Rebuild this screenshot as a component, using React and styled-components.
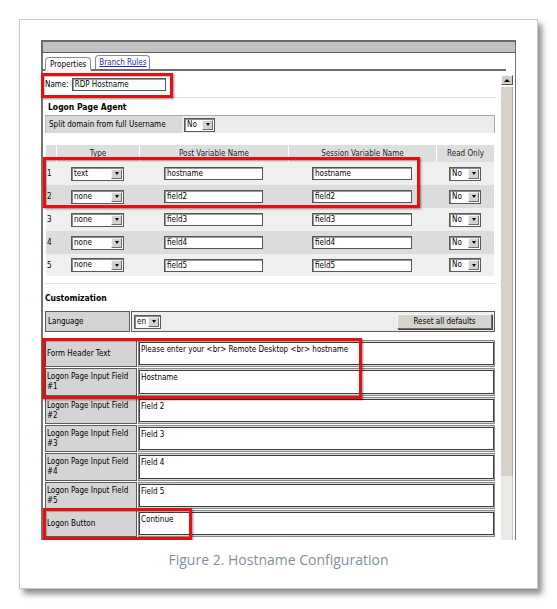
import React from 'react';
import styled, { createGlobalStyle } from 'styled-components';

const Global = createGlobalStyle`
  html, body { margin: 0; padding: 0; background: #fff; }
  body {
    width: 557px; height: 609px; overflow: hidden;
    font-family: "DejaVu Sans Condensed", "DejaVu Sans", sans-serif;
    font-size: 8px; color: #000;
  }
  * { box-sizing: border-box; }
`;

const Card = styled.div`
  margin: 19px 0 0 19px;
  width: 519px;
  height: 570px;
  border: 1px solid #c9c9c9;
  background: #fff;
  box-shadow: 4px 5px 6px rgba(0, 0, 0, 0.45);
  padding: 20px 0 0 21px;
  display: flex;
  flex-direction: column;
`;

const Frame = styled.div`
  position: relative;
  width: 475px;
  height: 500px;
  overflow: hidden;
  display: flex;
  flex-direction: column;
  background: #fff;
`;

const TitleBar = styled.div`
  height: 13px;
  flex: none;
  background: #c2c2c2;
  border-top: 2px solid #6b6b6b;
  border-bottom: 1px solid #5e5e5e;
  border-left: 2px solid #6b6b6b;
  border-right: 1px solid #6b6b6b;
`;

const Body = styled.div`
  flex: 1;
  display: flex;
  flex-direction: column;
  border-left: 2px solid #747474;
  border-right: 1px solid #747474;
  min-height: 0;
`;

const TabStrip = styled.div`
  height: 18px;
  flex: none;
  display: flex;
  align-items: flex-end;
  gap: 4px;
  padding-left: 2px;
  margin-right: 9px;
  border-bottom: 2px solid #6e6e6e;
`;

const Tab = styled.div`
  height: 14px;
  margin-bottom: ${p => (p.$active ? '-2px' : '0')};
  padding: 0 ${p => (p.$active ? 4 : 3)}px;
  border: 1px solid #8c8c8c;
  border-bottom: ${p => (p.$active ? '2px solid #fff' : 'none')};
  border-radius: 4px 4px 0 0;
  background: #fff;
  line-height: 13px;
  color: ${p => (p.$active ? '#000' : '#2b2bb0')};
  text-decoration: ${p => (p.$active ? 'none' : 'underline')};
`;

const Panel = styled.div`
  flex: 1;
  display: flex;
  min-height: 0;
`;

const Content = styled.div`
  width: 458px;
  flex: none;
  display: flex;
  flex-direction: column;
  padding-left: 2px;
`;

const NameRow = styled.div`
  height: 26px;
  flex: none;
  display: flex;
  align-items: center;
  gap: 3px;
`;

const TextInput = styled.div`
  width: ${p => p.$w}px;
  height: 13px;
  border: 1px solid #555;
  box-shadow: inset 1px 1px 0 #9a9a9a;
  background: #fff;
  padding-left: 2px;
  line-height: 11px;
  white-space: nowrap;
  overflow: hidden;
`;

const Sep = styled.div`
  height: 1px;
  flex: none;
  margin-right: 4px;
  background: #e2e2e2;
  margin-top: ${p => p.$mt || 0}px;
`;

const SectionTitle = styled.div`
  height: ${p => p.$h}px;
  flex: none;
  display: flex;
  align-items: center;
  padding-left: ${p => p.$pl || 0}px;
  font-weight: bold;
  font-size: 8.5px;
`;

const SplitRow = styled.div`
  width: 450px;
  height: 18px;
  flex: none;
  display: grid;
  grid-template-columns: 136px 1fr;
  border-top: 1px solid #a9a9a9;
  border-right: 1px solid #a9a9a9;
  border-left: 1px solid #bdbdbd;
`;

const SplitLabel = styled.div`
  background: #d9d9d9;
  display: flex;
  align-items: center;
  padding-left: 3px;
`;

const SplitValue = styled.div`
  background: #ececec;
  display: flex;
  align-items: center;
  padding-left: 2px;
`;

const SelectBox = styled.div`
  width: ${p => p.$w}px;
  height: 14px;
  flex: none;
  display: flex;
  align-items: center;
  border: 1px solid #5a5a5a;
  box-shadow: inset 1px 1px 0 #8a8a8a;
  background: #fff;
  padding-left: 2px;
`;

const SelectText = styled.span`
  flex: 1;
  line-height: 12px;
`;

const ArrowBtn = styled.span`
  width: 11px;
  height: 10px;
  margin-right: 1px;
  background: #d6d3ce;
  border: 1px solid;
  border-color: #f4f4f4 #6e6e6e #6e6e6e #f4f4f4;
  display: flex;
  align-items: center;
  justify-content: center;
  &::after {
    content: '';
    border-left: 2.5px solid transparent;
    border-right: 2.5px solid transparent;
    border-top: 3px solid #000;
  }
`;

const Select = ({ w, children }) => (
  <SelectBox $w={w}>
    <SelectText>{children}</SelectText>
    <ArrowBtn />
  </SelectBox>
);

const VarTable = styled.div`
  margin: 12px 0 0 1px;
  width: 448px;
  flex: none;
  display: grid;
  grid-template-columns: 10px 83px 149px 148px 58px;
  grid-template-rows: 17px repeat(4, 23px) 22px;
`;

const HeadCell = styled.div`
  background: #dedede;
  border-left: ${p => (p.$first ? 'none' : '1px solid #fff')};
  display: flex;
  align-items: center;
  justify-content: center;
  color: #222;
`;

const BodyCell = styled.div`
  background: ${p => (p.$dark ? '#dcdcdc' : '#efefef')};
  display: flex;
  align-items: center;
  justify-content: ${p => (p.$left ? 'flex-start' : 'center')};
  padding-left: ${p => (p.$left ? '1px' : '0')};
`;

const LangRow = styled.div`
  width: 450px;
  height: 21px;
  flex: none;
  display: grid;
  grid-template-columns: 85px 1fr;
  gap: 1px;
`;

const LangLabel = styled.div`
  background: #d4d4d4;
  border: 1px solid #5c5c5c;
  display: flex;
  align-items: center;
  padding-left: 2px;
`;

const LangValue = styled.div`
  background: #ededed;
  border: 1px solid #5c5c5c;
  display: flex;
  align-items: center;
  justify-content: space-between;
  padding: 0 2px 0 2px;
`;

const ResetButton = styled.div`
  width: 95px;
  height: 15px;
  background: #d6d3ce;
  border: 1px solid;
  border-color: #f6f6f6 #707070 #707070 #f6f6f6;
  box-shadow: 1px 1px 0 #404040;
  display: flex;
  align-items: center;
  justify-content: center;
`;

const FormTable = styled.div`
  margin-top: 8px;
  width: 450px;
  flex: none;
  display: grid;
  grid-template-columns: 92px 1fr;
  grid-auto-rows: 28.33px;
`;

const FormLabel = styled.div`
  margin-bottom: 1px;
  background: #d4d4d4;
  border: 1px solid #5c5c5c;
  display: flex;
  align-items: center;
  padding: 1px 0 0 1px;
  line-height: 10px;
`;

const FormValue = styled.div`
  margin: 0 0 1px 1px;
  border: 1px solid #8a8a8a;
  background: #d9d9d9;
  padding: 1px 0 1px 0;
  display: flex;
`;

const TextBox = styled.div`
  flex: 1;
  background: #fff;
  border: 1px solid #3e3e3e;
  padding: 2px 1px 0;
  line-height: 10px;
  white-space: nowrap;
  overflow: hidden;
`;

const Scrollbar = styled.div`
  width: 12px;
  flex: none;
  margin-top: 4px;
  display: flex;
  flex-direction: column;
`;

const UpBtn = styled.div`
  height: 10px;
  flex: none;
  background: #d4d0c8;
  border: 1px solid;
  border-color: #f8f8f8 #555 #555 #f8f8f8;
  display: flex;
  align-items: center;
  justify-content: center;
  &::after {
    content: '';
    border-left: 3px solid transparent;
    border-right: 3px solid transparent;
    border-bottom: 3px solid #000;
  }
`;

const Thumb = styled.div`
  height: 389px;
  flex: none;
  margin-top: 2px;
  background: #d6d2ca;
  border-right: 1px solid #a8a8a8;
`;

const Track = styled.div`
  flex: 1;
  background: #ebe9e5;
  border-right: 1px solid #c8c8c8;
`;

const RedBox = styled.div`
  position: absolute;
  left: ${p => p.$x}px;
  top: ${p => p.$y}px;
  width: ${p => p.$w}px;
  height: ${p => p.$h}px;
  border: 3px solid #e5100f;
  box-shadow: 1px 1px 2px rgba(0, 0, 0, 0.45), inset 1px 1px 1px rgba(0, 0, 0, 0.25);
  pointer-events: none;
`;

const Caption = styled.div`
  margin-top: 10px;
  margin-left: -21px;
  text-align: center;
  font-family: "Open Sans", "Noto Sans", sans-serif;
  font-size: 14px;
  color: #8090a0;
  line-height: 20px;
`;

const vars = [
  { n: 1, type: 'text', post: 'hostname', sess: 'hostname' },
  { n: 2, type: 'none', post: 'field2', sess: 'field2' },
  { n: 3, type: 'none', post: 'field3', sess: 'field3' },
  { n: 4, type: 'none', post: 'field4', sess: 'field4' },
  { n: 5, type: 'none', post: 'field5', sess: 'field5' },
];

const formRows = [
  { label: ['Form Header Text'], value: 'Please enter your <br> Remote Desktop <br> hostname' },
  { label: ['Logon Page Input Field', '#1'], value: 'Hostname' },
  { label: ['Logon Page Input Field', '#2'], value: 'Field 2' },
  { label: ['Logon Page Input Field', '#3'], value: 'Field 3' },
  { label: ['Logon Page Input Field', '#4'], value: 'Field 4' },
  { label: ['Logon Page Input Field', '#5'], value: 'Field 5' },
  { label: ['Logon Button'], value: 'Continue' },
];

export default function App() {
  return (
    <>
      <Global />
      <Card>
        <Frame>
          <TitleBar />
          <Body>
            <TabStrip>
              <Tab $active>Properties</Tab>
              <Tab>Branch Rules</Tab>
            </TabStrip>
            <Panel>
              <Content>
                <NameRow>
                  <span>Name:</span>
                  <TextInput $w={94}>RDP Hostname</TextInput>
                </NameRow>
                <Sep />
                <SectionTitle $h={17} $pl={3}>Logon Page Agent</SectionTitle>
                <SplitRow>
                  <SplitLabel>Split domain from full Username</SplitLabel>
                  <SplitValue>
                    <Select w={31}>No</Select>
                  </SplitValue>
                </SplitRow>
                <VarTable>
                  <HeadCell $first />
                  <HeadCell>Type</HeadCell>
                  <HeadCell>Post Variable Name</HeadCell>
                  <HeadCell>Session Variable Name</HeadCell>
                  <HeadCell>Read Only</HeadCell>
                  {vars.map((v, i) => (
                    <React.Fragment key={v.n}>
                      <BodyCell $dark={i % 2 === 1} $left>{v.n}</BodyCell>
                      <BodyCell $dark={i % 2 === 1}>
                        <Select w={53}>{v.type}</Select>
                      </BodyCell>
                      <BodyCell $dark={i % 2 === 1}>
                        <TextInput $w={99}>{v.post}</TextInput>
                      </BodyCell>
                      <BodyCell $dark={i % 2 === 1}>
                        <TextInput $w={100}>{v.sess}</TextInput>
                      </BodyCell>
                      <BodyCell $dark={i % 2 === 1}>
                        <Select w={32}>No</Select>
                      </BodyCell>
                    </React.Fragment>
                  ))}
                </VarTable>
                <Sep $mt={7} />
                <SectionTitle $h={27}>Customization</SectionTitle>
                <LangRow>
                  <LangLabel>Language</LangLabel>
                  <LangValue>
                    <Select w={27}>en</Select>
                    <ResetButton>Reset all defaults</ResetButton>
                  </LangValue>
                </LangRow>
                <FormTable>
                  {formRows.map((r, i) => (
                    <React.Fragment key={i}>
                      <FormLabel>
                        <span>
                          {r.label[0]}
                          {r.label[1] && (
                            <>
                              <br />
                              {r.label[1]}
                            </>
                          )}
                        </span>
                      </FormLabel>
                      <FormValue>
                        <TextBox>{r.value}</TextBox>
                      </FormValue>
                    </React.Fragment>
                  ))}
                </FormTable>
              </Content>
              <Scrollbar>
                <UpBtn />
                <Thumb />
                <Track />
              </Scrollbar>
            </Panel>
          </Body>
          <RedBox $x={0} $y={33} $w={132} $h={25} />
          <RedBox $x={2} $y={117} $w={377} $h={51} />
          <RedBox $x={1} $y={298} $w={320} $h={61} />
          <RedBox $x={2} $y={468} $w={149} $h={32} />
        </Frame>
        <Caption>Figure 2. Hostname Configuration</Caption>
      </Card>
    </>
  );
}
